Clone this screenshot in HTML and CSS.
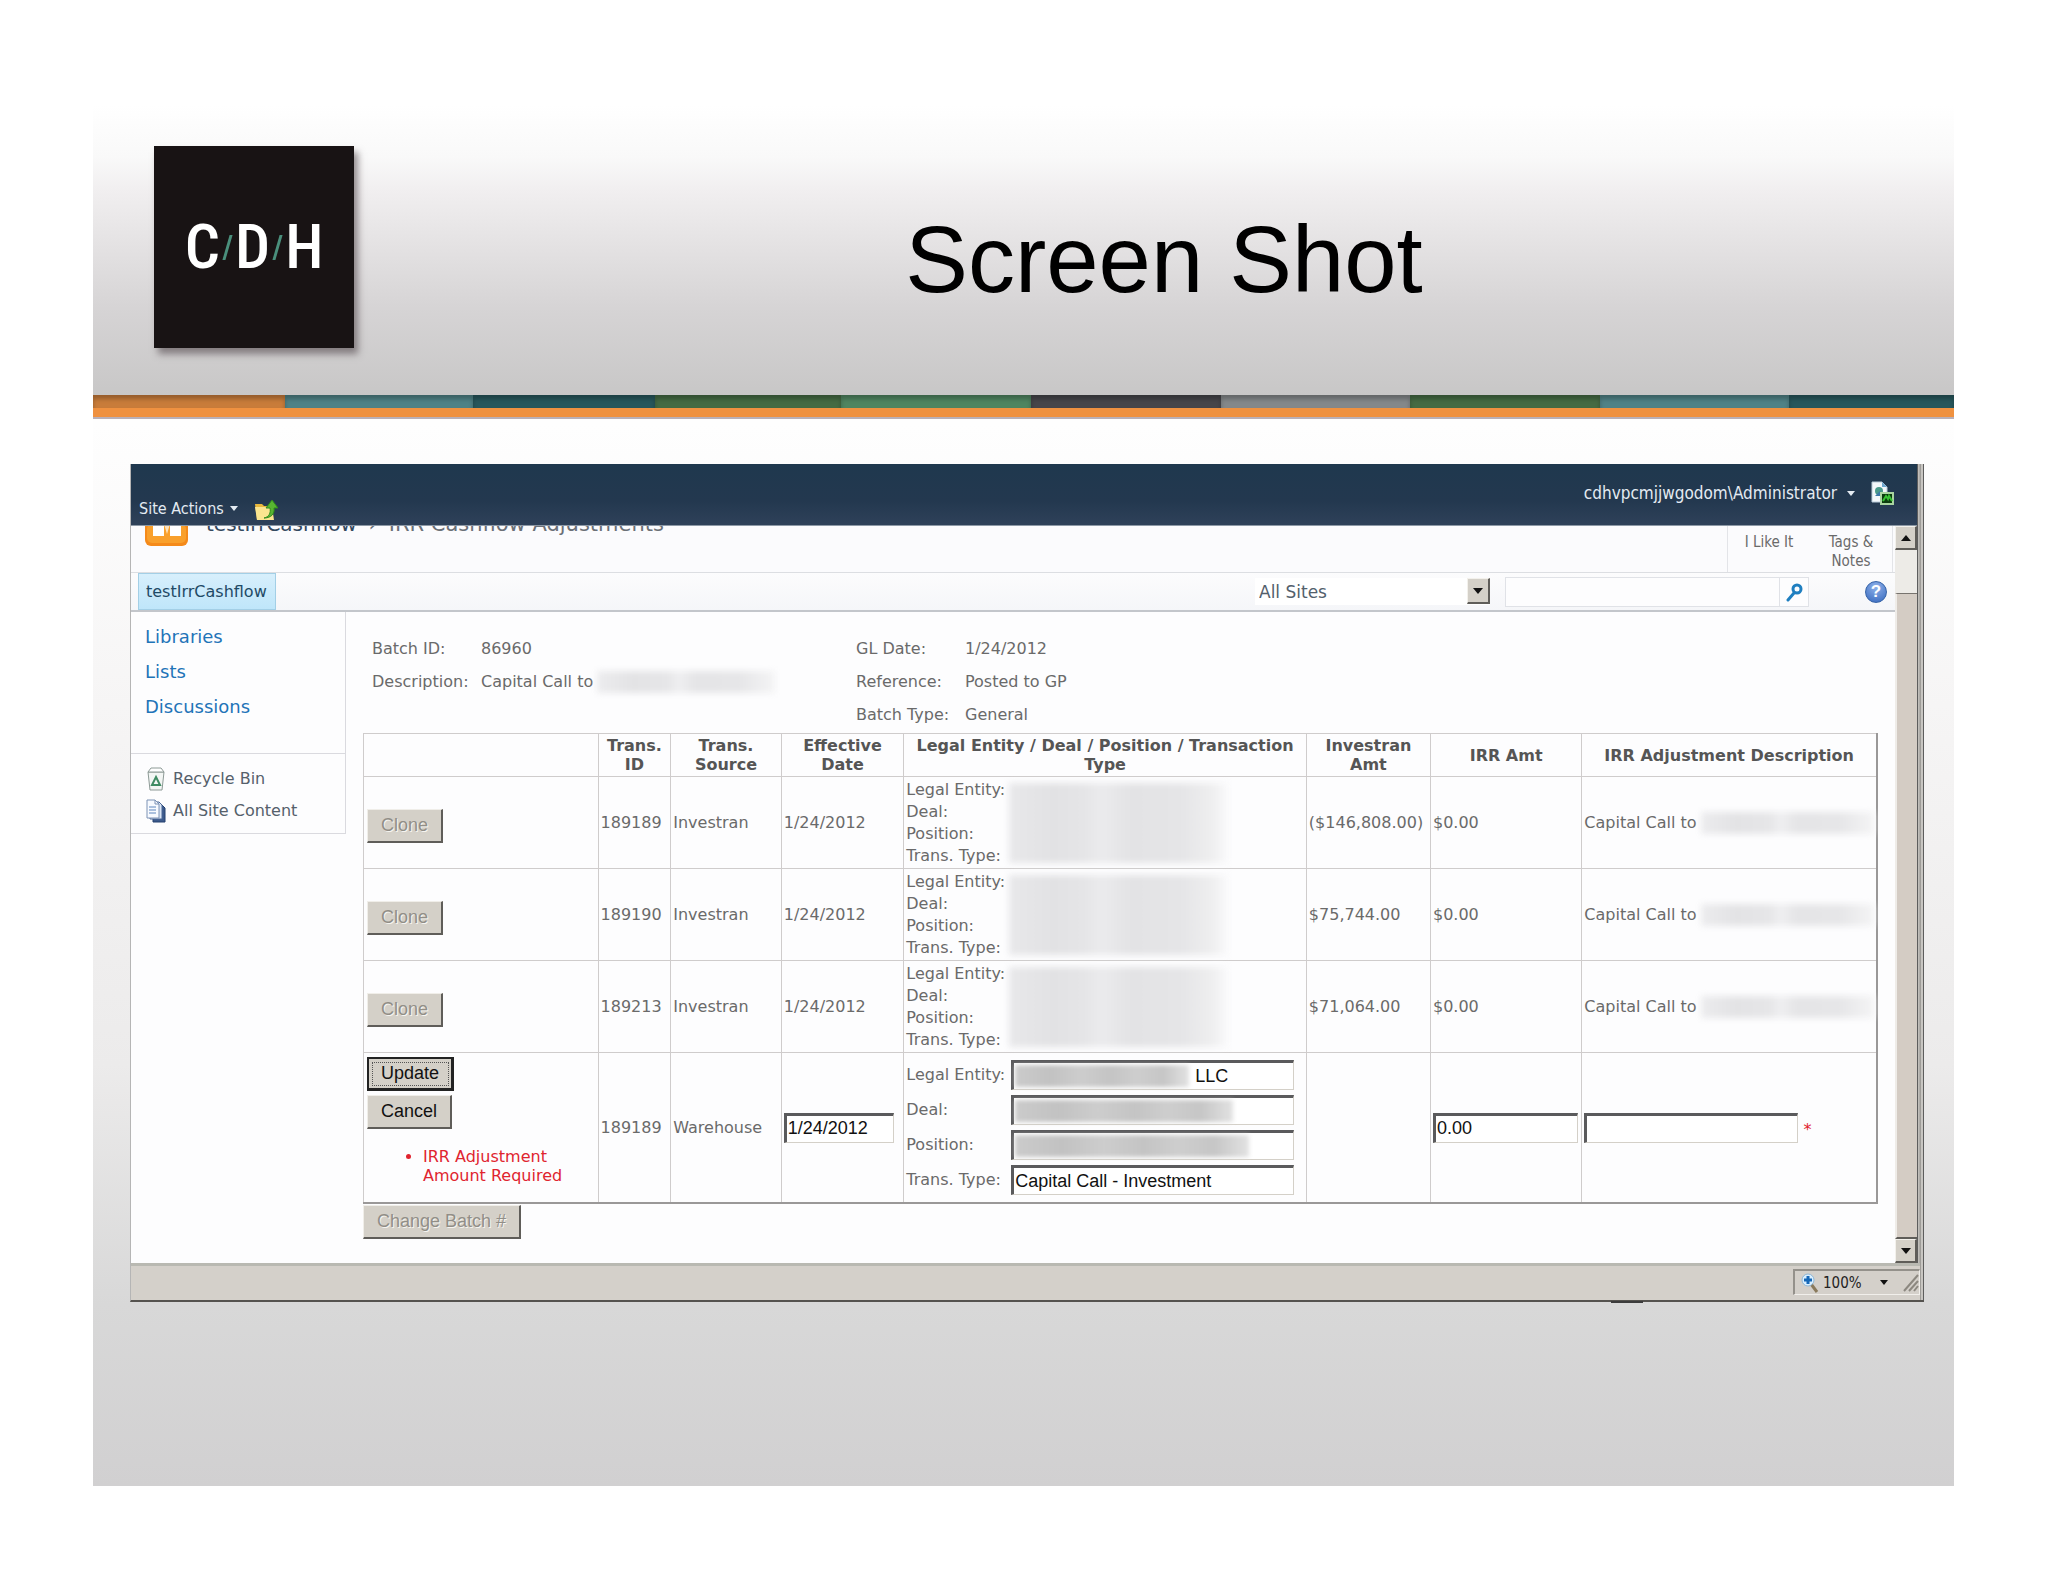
FILE: index.html
```
<!DOCTYPE html>
<html lang="en">
<head>
  <meta charset="UTF-8" />
  <meta name="viewport" content="width=device-width, initial-scale=1.0" />
  <title>Screen Shot</title>
  <link rel="stylesheet" href="styles.css">
</head>
<body>
  <div class="slide">
    <header class="slide-header">
      <div class="logo">
        <span>C</span><i></i><span>D</span><i></i><span>H</span>
      </div>
      <h1>Screen Shot</h1>
    </header>
    <div class="stripes">
      <span class="orange"></span>
      <span class="teal"></span>
      <span class="petrol"></span>
      <span class="moss"></span>
      <span class="green"></span>
      <span class="charcoal"></span>
      <span class="gray"></span>
      <span class="moss"></span>
      <span class="teal"></span>
      <span class="petrol"></span>
    </div>

    <div class="window">
      <div class="ribbon">
        <div class="ribbon-left">
          <button type="button" class="menu">Site Actions <b class="caret"></b></button>
          <svg width="24" height="22" viewBox="0 0 24 22">
            <path d="M1 5h7l2 2h9v14H3z" fill="#e9b83c"/>
            <path d="M1 8h17l2 13H3z" fill="#fbe58f"/>
            <path d="M10 19c5-1 7-5 6-10h-4l6-8 6 8h-4c1 6-3 10-10 10z" fill="#58b531" stroke="#2f8a1c" stroke-width="1"/>
          </svg>
        </div>
        <div class="ribbon-right">
          <button type="button" class="menu user">cdhvpcmjjwgodom\Administrator <b class="caret"></b></button>
          <svg width="24" height="24" viewBox="0 0 24 24">
            <path d="M1 1h10l5 5v15H1z" fill="#f4f8fb" stroke="#b9cbd8"/>
            <path d="M11 1v5h5" fill="#6fa8cf"/>
            <circle cx="8" cy="10" r="4" fill="#4a9a8b"/>
            <path d="M4 15l5-5 4 5z" fill="#3c78a8"/>
            <rect x="10" y="12" width="12" height="11" fill="#0b3d0d" stroke="#a9d5a0" stroke-width="2"/>
            <path d="M12 20l3-5 2 3 1-3 3 5" fill="none" stroke="#37c232" stroke-width="2"/>
          </svg>
        </div>
      </div>

      <div class="body-row">
        <div class="page">
          <div class="site-header">
            <svg class="site-icon" width="43" height="42" viewBox="0 0 43 42">
              <rect x="0" y="0" width="43" height="42" rx="6" fill="#f58a1a"/>
              <rect x="2" y="20" width="39" height="19" rx="5" fill="#f9a02c"/>
              <path d="M8 10h11v22H8zM25 10h11v22H25z" fill="#fff"/>
              <path d="M19 20h6l-3 10z" fill="#fde2bd"/>
            </svg>
            <div class="crumbs"><a href="#">testIrrCashflow</a> <span>›</span> IRR Cashflow Adjustments</div>
            <div class="social">
              <a href="#">I Like It</a>
              <a href="#">Tags &amp;<br>Notes</a>
            </div>
          </div>

          <div class="tabs">
            <a class="tab" href="#">testIrrCashflow</a>
            <div class="search">
              <div class="scope">
                <select aria-label="Search scope"><option>All Sites</option></select>
                <span class="drop"><b class="arrow-down"></b></span>
              </div>
              <div class="search-box">
                <input type="text" aria-label="Search">
                <button type="button" aria-label="Search">
                  <svg width="18" height="20" viewBox="0 0 18 20">
                    <circle cx="12" cy="7" r="4" fill="none" stroke="#1f7fc0" stroke-width="3"/>
                    <path d="M9 11l-6 7" stroke="#1f7fc0" stroke-width="3" stroke-linecap="round"/>
                  </svg>
                </button>
              </div>
              <a class="help" href="#">?</a>
            </div>
          </div>

          <div class="columns">
            <nav class="sidebar">
              <div class="quick">
                <a href="#">Libraries</a>
                <a href="#">Lists</a>
                <a href="#">Discussions</a>
              </div>
              <div class="tools">
                <a href="#">
                  <svg width="20" height="24" viewBox="0 0 20 24">
                    <path d="M2 5h16l-2 18H4z" fill="#f3f6f4" stroke="#8d9a96"/>
                    <path d="M2 5l3-4h10l3 4z" fill="#fff" stroke="#8d9a96"/>
                    <path d="M10 10l4 8H6z" fill="none" stroke="#3f8b63" stroke-width="2"/>
                  </svg>
                  Recycle Bin
                </a>
                <a href="#">
                  <svg width="20" height="24" viewBox="0 0 20 24">
                    <path d="M7 6h9l3 3v14H7z" fill="#3d5a8c" stroke="#24406f"/>
                    <path d="M4 3h9l3 3v14H4z" fill="#dbe6f5" stroke="#4b6795"/>
                    <path d="M1 1h8l4 4v14H1z" fill="#f7faff" stroke="#7d92b5"/>
                    <path d="M3 8h7M3 11h7M3 14h7" stroke="#5f86bd" stroke-width="1"/>
                    <path d="M9 1v4h4" fill="none" stroke="#7d92b5"/>
                  </svg>
                  All Site Content
                </a>
              </div>
            </nav>

            <main>
              <div class="batch">
                <span>Batch ID:</span><span>86960</span>
                <span>GL Date:</span><span>1/24/2012</span>
                <span>Description:</span><span class="hidden-line">Capital Call to <i class="smudge name"></i></span>
                <span>Reference:</span><span>Posted to GP</span>
                <span></span><span></span>
                <span>Batch Type:</span><span>General</span>
              </div>

              <table>
                <colgroup>
                  <col class="c-action"><col class="c-id"><col class="c-source"><col class="c-date">
                  <col class="c-entity"><col class="c-amt"><col class="c-irr"><col>
                </colgroup>
                <thead>
                  <tr>
                    <th></th>
                    <th>Trans. ID</th>
                    <th>Trans. Source</th>
                    <th>Effective Date</th>
                    <th>Legal Entity / Deal / Position / Transaction Type</th>
                    <th>Investran Amt</th>
                    <th>IRR Amt</th>
                    <th>IRR Adjustment Description</th>
                  </tr>
                </thead>
                <tbody>
                  <tr>
                    <td class="clone"><button type="button" disabled>Clone</button></td>
                    <td>189189</td>
                    <td>Investran</td>
                    <td>1/24/2012</td>
                    <td>
                      <div class="entity">
                        <div>Legal Entity:<br>Deal:<br>Position:<br>Trans. Type:</div>
                        <i class="smudge block"></i>
                      </div>
                    </td>
                    <td>($146,808.00)</td>
                    <td>$0.00</td>
                    <td><div class="hidden-line">Capital Call to <i class="smudge fill"></i></div></td>
                  </tr>
                  <tr>
                    <td class="clone"><button type="button" disabled>Clone</button></td>
                    <td>189190</td>
                    <td>Investran</td>
                    <td>1/24/2012</td>
                    <td>
                      <div class="entity">
                        <div>Legal Entity:<br>Deal:<br>Position:<br>Trans. Type:</div>
                        <i class="smudge block"></i>
                      </div>
                    </td>
                    <td>$75,744.00</td>
                    <td>$0.00</td>
                    <td><div class="hidden-line">Capital Call to <i class="smudge fill"></i></div></td>
                  </tr>
                  <tr>
                    <td class="clone"><button type="button" disabled>Clone</button></td>
                    <td>189213</td>
                    <td>Investran</td>
                    <td>1/24/2012</td>
                    <td>
                      <div class="entity">
                        <div>Legal Entity:<br>Deal:<br>Position:<br>Trans. Type:</div>
                        <i class="smudge block"></i>
                      </div>
                    </td>
                    <td>$71,064.00</td>
                    <td>$0.00</td>
                    <td><div class="hidden-line">Capital Call to <i class="smudge fill"></i></div></td>
                  </tr>
                  <tr class="edit">
                    <td class="actions">
                      <button type="button" class="default">Update</button>
                      <button type="button">Cancel</button>
                      <ul>
                        <li>IRR Adjustment Amount Required</li>
                      </ul>
                    </td>
                    <td>189189</td>
                    <td>Warehouse</td>
                    <td><input class="date" type="text" aria-label="Effective Date" value="1/24/2012"></td>
                    <td>
                      <div class="fields">
                        <label for="entity">Legal Entity:</label>
                        <div class="field"><input id="entity" class="after-smudge" type="text" value="LLC"><i class="smudge dark w1"></i></div>
                        <label for="deal">Deal:</label>
                        <div class="field"><input id="deal" type="text"><i class="smudge dark w2"></i></div>
                        <label for="position">Position:</label>
                        <div class="field"><input id="position" type="text"><i class="smudge dark w3"></i></div>
                        <label for="type">Trans. Type:</label>
                        <div class="field"><input id="type" type="text" value="Capital Call - Investment"></div>
                      </div>
                    </td>
                    <td></td>
                    <td><input class="irr" type="text" aria-label="IRR Amt" value="0.00"></td>
                    <td><input class="desc" type="text" aria-label="IRR Adjustment Description"> <span class="required">*</span></td>
                  </tr>
                </tbody>
              </table>
              <button type="button" class="change" disabled>Change Batch #</button>
            </main>
          </div>
        </div>

        <div class="scrollbar">
          <span class="scroll-button"><b class="arrow-up"></b></span>
          <span class="thumb"></span>
          <span class="scroll-button"><b class="arrow-down"></b></span>
        </div>
      </div>

      <div class="status">
        <div class="zoom">
          <svg width="18" height="20" viewBox="0 0 18 20">
            <path d="M10 11l6 8" stroke="#8a7a5c" stroke-width="3"/>
            <circle cx="7" cy="7" r="6" fill="#d9efff" stroke="#8fb7d6"/>
            <path d="M7 3v8M3 7h8" stroke="#1668b8" stroke-width="3"/>
          </svg>
          <span>100%</span>
          <b class="arrow-down"></b>
          <svg class="grip" width="16" height="18" viewBox="0 0 16 18">
            <path d="M1 17L15 1M6 17l9-10M11 17l4-5" stroke="#8c8880" stroke-width="2"/>
          </svg>
        </div>
      </div>
    </div>
  </div>
</body>
</html>
```
FILE: styles.css
```
* {
  box-sizing: border-box;
}
body {
  margin: 0;
  background: #fff;
  font-family: "DejaVu Sans", Verdana, sans-serif;
  font-size: 16px;
  color: #6a6a6a;
}
a {
  color: inherit;
  text-decoration: none;
}

/* slide */
.slide {
  margin: 105px 94px 96px 93px;
  padding-bottom: 184px;
  background: linear-gradient(#fefefe 320px, #f6f5f5 600px, #ecebeb 960px, #d8d8d8 1200px, #d1d0d1);
}
.slide-header {
  display: flex;
  align-items: center;
  height: 290px;
  padding-left: 61px;
  background: linear-gradient(#fff, #f9f9f9 18%, #f1eff0 29%, #e3e1e2 50%, #d6d4d5 70%, #c8c7c7);
}
.logo {
  display: flex;
  align-items: center;
  justify-content: center;
  gap: 6px;
  width: 200px;
  height: 202px;
  margin-bottom: 6px;
  background: #181314;
  box-shadow: 4px 6px 7px rgba(80, 70, 75, 0.6);
  font: 500 62px/1 "Roboto Condensed", "Open Sans Condensed", "Noto Sans Condensed", "Liberation Sans Narrow", "Liberation Sans", sans-serif;
  color: #fff;
}
.logo i {
  width: 3px;
  height: 25px;
  flex: none;
  background: #4a8f7c;
  transform: skewX(-16deg);
}
h1 {
  flex: 1;
  margin: 0;
  padding: 20px 180px 0 200px;
  text-align: center;
  font: 94px/108px "Liberation Sans", Arial, sans-serif;
  color: #000;
}
.stripes {
  display: grid;
  grid-template-columns: 192fr 188fr 182fr 186fr 190fr 190fr 189fr 190fr 189fr 165fr;
  height: 24px;
  padding-bottom: 9px;
  border-bottom: 2px solid #b9b0b8;
  background: #ef9140;
}
.stripes span {
  box-shadow: inset 0 4px 4px rgba(0, 0, 0, 0.25);
}
.stripes .orange { background: #c87c3a; }
.stripes .teal { background: #4f8286; }
.stripes .petrol { background: #27575c; }
.stripes .moss { background: #446b43; }
.stripes .green { background: #4f8560; }
.stripes .charcoal { background: #46464a; }
.stripes .gray { background: #84888a; }

/* browser window */
.window {
  position: relative;
  margin: 45px 30px 0 37px;
  padding-right: 7px;
  border-left: 1px solid #b5b5b5;
  border-bottom: 2px solid #55534f;
  background: linear-gradient(to left, #5d5d5d 1px, #c8c6c2 1px, #c8c6c2 3px, #969490 3px, #c8c6c2 6px, #5d5d5d 6px, #5d5d5d 7px, #fff 7px);
}
.window::after {
  content: "";
  position: absolute;
  right: 281px;
  bottom: -3px;
  width: 32px;
  height: 2px;
  background: #3c3c3c;
}
.ribbon {
  display: flex;
  justify-content: space-between;
  height: 62px;
  background: linear-gradient(#1f384e, #23384f 60%, #2f4159);
  border-bottom: 1px solid #8d99a6;
}
.menu {
  height: auto;
  padding: 0;
  border: 0;
  background: none;
  font: 16px "DejaVu Sans Condensed", Tahoma, sans-serif;
  color: #e4ebf2;
}
.menu.user {
  font-size: 17px;
}
.caret {
  display: inline-block;
  margin: 0 0 3px 2px;
  border: 4px solid transparent;
  border-top: 5px solid #e4ebf2;
  border-bottom: 0;
}
.ribbon-left {
  display: flex;
  align-items: flex-end;
  gap: 16px;
  padding: 0 0 4px 8px;
}
.ribbon-left .menu {
  padding-bottom: 3px;
}
.ribbon-right {
  display: flex;
  align-items: center;
  gap: 16px;
  padding: 0 22px 3px 0;
}
.user .caret {
  margin-left: 5px;
}
.body-row {
  display: flex;
}
.page {
  flex: 1;
  min-width: 0;
  background: #fdfdfe;
}
.site-header {
  display: flex;
  height: 47px;
  overflow: hidden;
  padding-left: 14px;
  background: #fbfbfd;
  border-bottom: 1px solid #dcdee2;
}
.site-icon {
  margin-top: -22px;
}
.crumbs {
  flex: 1;
  margin: -18px 0 0 18px;
  font-size: 21px;
  line-height: 32px;
  white-space: nowrap;
  color: #6b7077;
}
.crumbs a {
  font-size: 20px;
  color: #34495f;
}
.crumbs span {
  padding: 0 5px;
}
.social {
  display: flex;
  margin-right: 2px;
  border-left: 1px solid #e3e4e8;
  border-right: 1px solid #e3e4e8;
  font: 15px/19px "DejaVu Sans Condensed", Tahoma, sans-serif;
  text-align: center;
}
.social a {
  width: 82px;
  padding-top: 7px;
}
.tabs {
  display: flex;
  justify-content: space-between;
  height: 39px;
  padding-left: 7px;
  background: linear-gradient(#fcfcfd, #f5f6f9);
  border-bottom: 2px solid #c3c6cb;
}
.tab {
  padding: 0 8px 0 7px;
  border: 1px solid #a3cfe6;
  background: linear-gradient(#d7effc, #bfe6fa);
  line-height: 35px;
  color: #1f4a66;
}
.search {
  display: flex;
  align-items: center;
  gap: 15px;
  padding-right: 8px;
}
.scope {
  position: relative;
  width: 235px;
}
.scope select {
  width: 100%;
  height: 27px;
  padding: 0 4px;
  border: 0;
  border-radius: 0;
  background: #fff;
  appearance: none;
  font: 17px "DejaVu Sans", Verdana, sans-serif;
  color: #53606c;
}
.drop {
  position: absolute;
  top: 0;
  right: 0;
  display: flex;
  align-items: center;
  justify-content: center;
  width: 23px;
  height: 26px;
  pointer-events: none;
}
.drop,
.scroll-button {
  background: #d4d0c8;
  border: 1px solid #f3f1ec;
  border-right: 2px solid #5f5d59;
  border-bottom: 2px solid #5f5d59;
}
.arrow-down,
.arrow-up {
  border: 5px solid transparent;
  border-top: 6px solid #111;
  border-bottom: 0;
}
.arrow-up {
  border-top: 0;
  border-bottom: 6px solid #111;
}
.search-box {
  display: flex;
  width: 304px;
  height: 30px;
  margin-right: 41px;
  border: 1px solid #e0e2e7;
}
.search-box input {
  flex: 1;
  min-width: 0;
  height: auto;
  border: 0;
  background: #fdfdfe;
}
.search-box button {
  display: flex;
  align-items: center;
  justify-content: center;
  width: 29px;
  height: auto;
  padding: 0;
  border: 0;
  border-left: 1px solid #e0e2e7;
  background: #fdfdfe;
}
.help {
  width: 22px;
  height: 22px;
  border-radius: 50%;
  border: 1px solid #3563a8;
  background: radial-gradient(circle at 50% 25%, #8fb2ea, #3567bd);
  font: bold 17px/20px "Liberation Sans", Arial, sans-serif;
  text-align: center;
  color: #fff;
}

/* left navigation */
.columns {
  display: flex;
  align-items: flex-start;
}
.sidebar {
  width: 215px;
  border-right: 1px solid #dadadf;
  border-bottom: 1px solid #dadadf;
}
.sidebar a {
  display: flex;
  align-items: center;
}
.quick {
  padding: 7px 14px 29px;
  border-bottom: 1px solid #dadadf;
  font-size: 18px;
  line-height: 35px;
  color: #1f74b8;
}
.tools {
  padding: 9px 15px 6px;
  line-height: 32px;
  color: #55606b;
}
.tools svg {
  margin-right: 7px;
}

/* batch */
main {
  flex: 1;
  min-width: 0;
  padding: 20px 17px 24px;
}
.batch {
  display: grid;
  grid-template-columns: 109px 375px 109px 1fr;
  padding: 0 0 2px 9px;
  line-height: 33px;
}
.hidden-line {
  display: flex;
  align-items: center;
  gap: 4px;
  white-space: nowrap;
}
.smudge {
  display: block;
  height: 22px;
  background: linear-gradient(to right, #ececee, #e3e3e5 20%, #e6e6e8 40%, #efeff1 46%, #e5e5e7 55%, #e6e6e8 80%, #f4f4f5);
  filter: blur(3px);
}
.smudge.name {
  width: 178px;
}
.smudge.fill {
  flex: 1;
}
table {
  width: 100%;
  table-layout: fixed;
  border-collapse: collapse;
  border: 1px solid #c9c7c7;
  border-right: 2px solid #9a9898;
  border-bottom: 2px solid #9a9898;
}
.c-action { width: 15.5%; }
.c-id { width: 4.8%; }
.c-source { width: 7.3%; }
.c-date { width: 8.1%; }
.c-entity { width: 26.6%; }
.c-amt { width: 8.2%; }
.c-irr { width: 10%; }
th, td {
  padding: 1px 2px;
  border: 1px solid #cfcccc;
  text-align: left;
  line-height: 22px;
}
th {
  padding: 2px;
  text-align: center;
  line-height: 19px;
  color: #555;
}
.clone {
  padding: 7px 3px 0;
}
.entity {
  display: flex;
  padding-top: 1px;
}
.entity div {
  width: 103px;
  white-space: nowrap;
}
.smudge.block {
  width: 220px;
  height: 80px;
  margin-top: 4px;
  background: linear-gradient(to right, #e8e8ea, #e2e2e4 20%, #e5e5e7 34%, #ebebed 42%, #e3e3e5 55%, #e5e5e7 78%, #eeeeef 92%, #fbfbfc);
}
button {
  height: 34px;
  padding: 0 13px;
  border: 1px solid #f0eee9;
  border-right: 2px solid #5f5d59;
  border-bottom: 2px solid #5f5d59;
  border-radius: 0;
  background: #d4d0c8;
  font: 18px "Liberation Sans", Arial, sans-serif;
  color: #111;
}
button:disabled {
  color: #918e87;
  text-shadow: 1px 1px 0 #f6f4ef;
}
button.default {
  padding: 0 12px;
  border: 2px solid #222;
  border-right-width: 3px;
  border-bottom-width: 3px;
  outline: 1px dotted #555;
  outline-offset: -6px;
}
button.change {
  display: block;
  margin-top: 1px;
}
input {
  height: 30px;
  padding: 0 1px;
  border: 1px solid #d4d0c8;
  border-top: 3px solid #5a5a5c;
  border-left: 3px solid #5a5a5c;
  background: #fff;
  font: 18px "Liberation Sans", Arial, sans-serif;
  color: #111;
}
.actions {
  padding: 4px 3px 17px;
  vertical-align: top;
}
.actions button {
  display: block;
  margin-bottom: 4px;
}
.actions ul {
  margin: 18px 20px 0 0;
  padding-left: 56px;
  line-height: 19px;
  color: #e0242f;
}
.date { width: 110px; }
.irr { width: 145px; }
.desc { width: 214px; }
.required {
  color: #e0242f;
}
.fields {
  display: grid;
  grid-template-columns: 105px 283px;
  gap: 5px 0;
  align-items: center;
}
.field {
  position: relative;
}
.field input {
  display: block;
  width: 100%;
}
.field .after-smudge {
  padding-left: 181px;
}
.smudge.dark {
  position: absolute;
  top: 5px;
  left: 4px;
  background: linear-gradient(to right, #cbcbcb, #c2c2c2 20%, #cdcdcd 38%, #c4c4c4 55%, #cecece 70%, #c6c6c6 85%, #e2e2e2);
  filter: blur(2px);
}
.w1 { width: 174px; }
.w2 { width: 218px; }
.w3 { width: 234px; }

/* scrollbar and status bar */
.scrollbar {
  display: flex;
  flex-direction: column;
  width: 22px;
  background: #edebe7;
}
.scroll-button {
  display: flex;
  align-items: center;
  justify-content: center;
  height: 24px;
}
.thumb {
  flex: 1;
  margin-top: 43px;
  background: #d4ccc4;
  border-left: 2px solid #efece8;
  border-top: 1px solid #77736e;
  border-bottom: 2px solid #5f5d59;
}
.status {
  display: flex;
  justify-content: flex-end;
  padding: 3px 0 5px;
  margin-right: -3px;
  border-top: 3px solid #b9b9b2;
  background: #d4d0ca;
}
.zoom {
  display: flex;
  align-items: center;
  width: 127px;
  height: 26px;
  padding-left: 6px;
  border: 1px solid #f1efeb;
  border-top: 2px solid #94918b;
  border-left: 2px solid #94918b;
  font: 15px "DejaVu Sans Condensed", Tahoma, sans-serif;
  color: #222;
}
.zoom span {
  margin: 0 18px 0 4px;
}
.zoom .arrow-down {
  border-width: 5px 4px 0;
}
.grip {
  margin-left: auto;
}
```
